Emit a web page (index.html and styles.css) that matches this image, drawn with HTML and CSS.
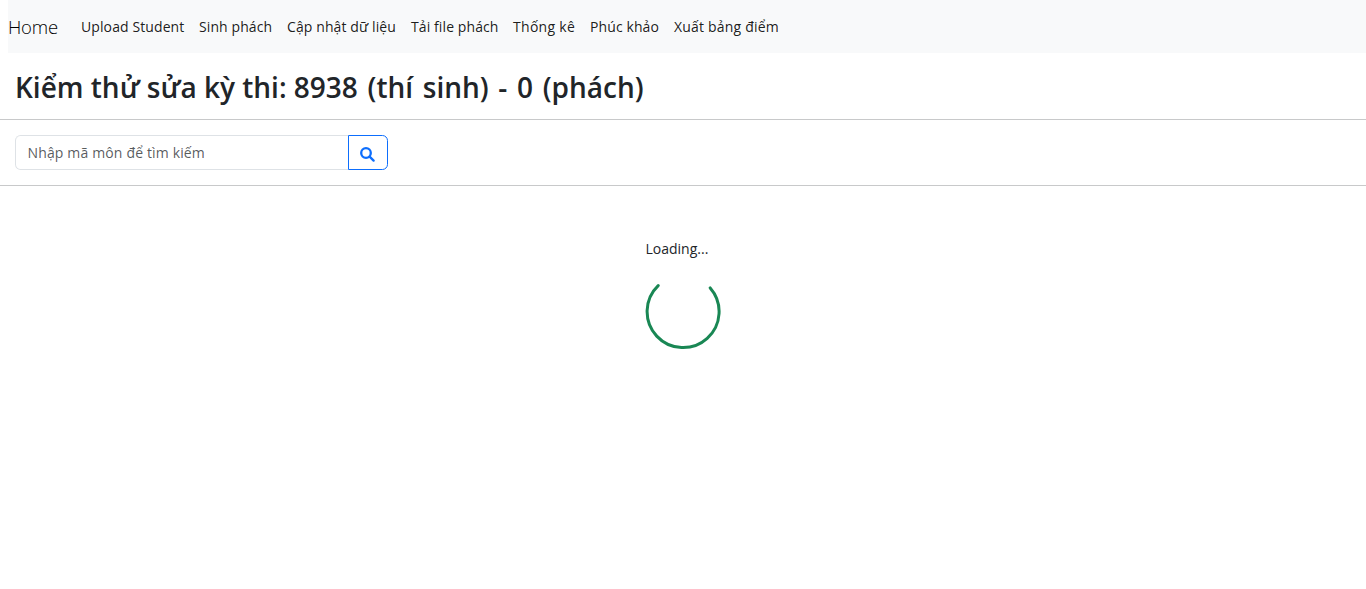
FILE: index.html
```html
<!DOCTYPE html>
<html lang="vi">
<head>
<meta charset="utf-8">
<title>Kiểm thử sửa kỳ thi</title>
<link rel="stylesheet" href="styles.css">
</head>
<body>
<nav class="navbar">
  <a class="brand">Home</a>
  <a class="nav-link upload">Upload Student</a>
  <a class="nav-link codes">Sinh phách</a>
  <a class="nav-link update">Cập nhật dữ liệu</a>
  <a class="nav-link files">Tải file phách</a>
  <a class="nav-link stats">Thống kê</a>
  <a class="nav-link review">Phúc khảo</a>
  <a class="nav-link export">Xuất bảng điểm</a>
</nav>
<header class="page-header">
  <h2 class="title">Kiểm thử sửa kỳ thi: <span class="counts">8938 (thí sinh) - 0 (phách)</span></h2>
</header>
<form class="search">
  <input class="search-input" type="text" placeholder="Nhập mã môn để tìm kiếm">
  <button class="search-button" type="button" aria-label="Tìm kiếm">
    <svg class="search-icon" viewBox="0 0 15 15"><circle cx="6" cy="6" r="4.8"/><path d="M9.6 9.6 13.6 13.6"/></svg>
  </button>
</form>
<main class="loading">
  <div class="loading-box">
    <span class="loading-text">Loading...</span>
    <svg class="spinner" viewBox="0 0 76 76"><path d="M13.2 11.6A36 36 0 1 0 65.2 13.9"/></svg>
  </div>
</main>
</body>
</html>
```

FILE: styles.css
```css
* { box-sizing: border-box; }
body {
  margin: 0;
  background: #fff;
  color: #212529;
  font: 400 14px/22px "Segoe UI", "Open Sans", "Noto Sans", sans-serif;
}
.navbar {
  display: flex;
  align-items: center;
  gap: 15px;
  height: 53px;
  margin-left: 8px;
  background: #f8f9fa;
  color: rgba(0, 0, 0, .9);
  white-space: nowrap;
}
.brand { width: 50px; margin-right: 8px; color: #000; font-size: 18.5px; font-weight: 300; letter-spacing: -.2px; }
.nav-link { padding-top: 1px; letter-spacing: .1px; }
.upload { width: 103px; }
.codes { width: 73px; }
.update { width: 109px; }
.files { width: 87px; }
.stats { width: 62px; letter-spacing: .3px; }
.review { width: 69px; }
.export { width: 105px; letter-spacing: .2px; }
.page-header { height: 67px; padding: 16px 15px 0; border-bottom: 1px solid #c8c9ca; }
.title { margin: 0; font-size: 28px; line-height: 36px; font-weight: 600; white-space: nowrap; }
.counts { word-spacing: 2.4px; }
.search { display: flex; height: 66px; padding: 15px; border-bottom: 1px solid #c8c9ca; }
.search-input {
  width: 333px;
  height: 35px;
  padding: 0 11.5px;
  border: 1px solid #dee2e6;
  border-right: 0;
  border-radius: 5.6px 0 0 5.6px;
  color: #212529;
  font: inherit;
  letter-spacing: .15px;
}
.search-input::placeholder { color: rgba(33, 37, 41, .75); opacity: 1; }
.search-button {
  display: flex;
  align-items: center;
  justify-content: center;
  width: 40px;
  height: 35px;
  padding: 4px 1px 0 0;
  border: 1px solid #0d6efd;
  border-radius: 0 5.6px 5.6px 0;
  background: transparent;
}
.search-icon { width: 15px; height: 15px; fill: none; stroke: #0d6efd; stroke-width: 2.3; stroke-linecap: round; }
.loading { display: flex; justify-content: center; padding-top: 52px; }
.loading-box { display: flex; flex-direction: column; width: 76px; gap: 13.5px; }
.loading-text { padding-left: .5px; }
.spinner { width: 76px; height: 76px; fill: none; stroke: #198754; stroke-width: 3; stroke-linecap: round; }
```
